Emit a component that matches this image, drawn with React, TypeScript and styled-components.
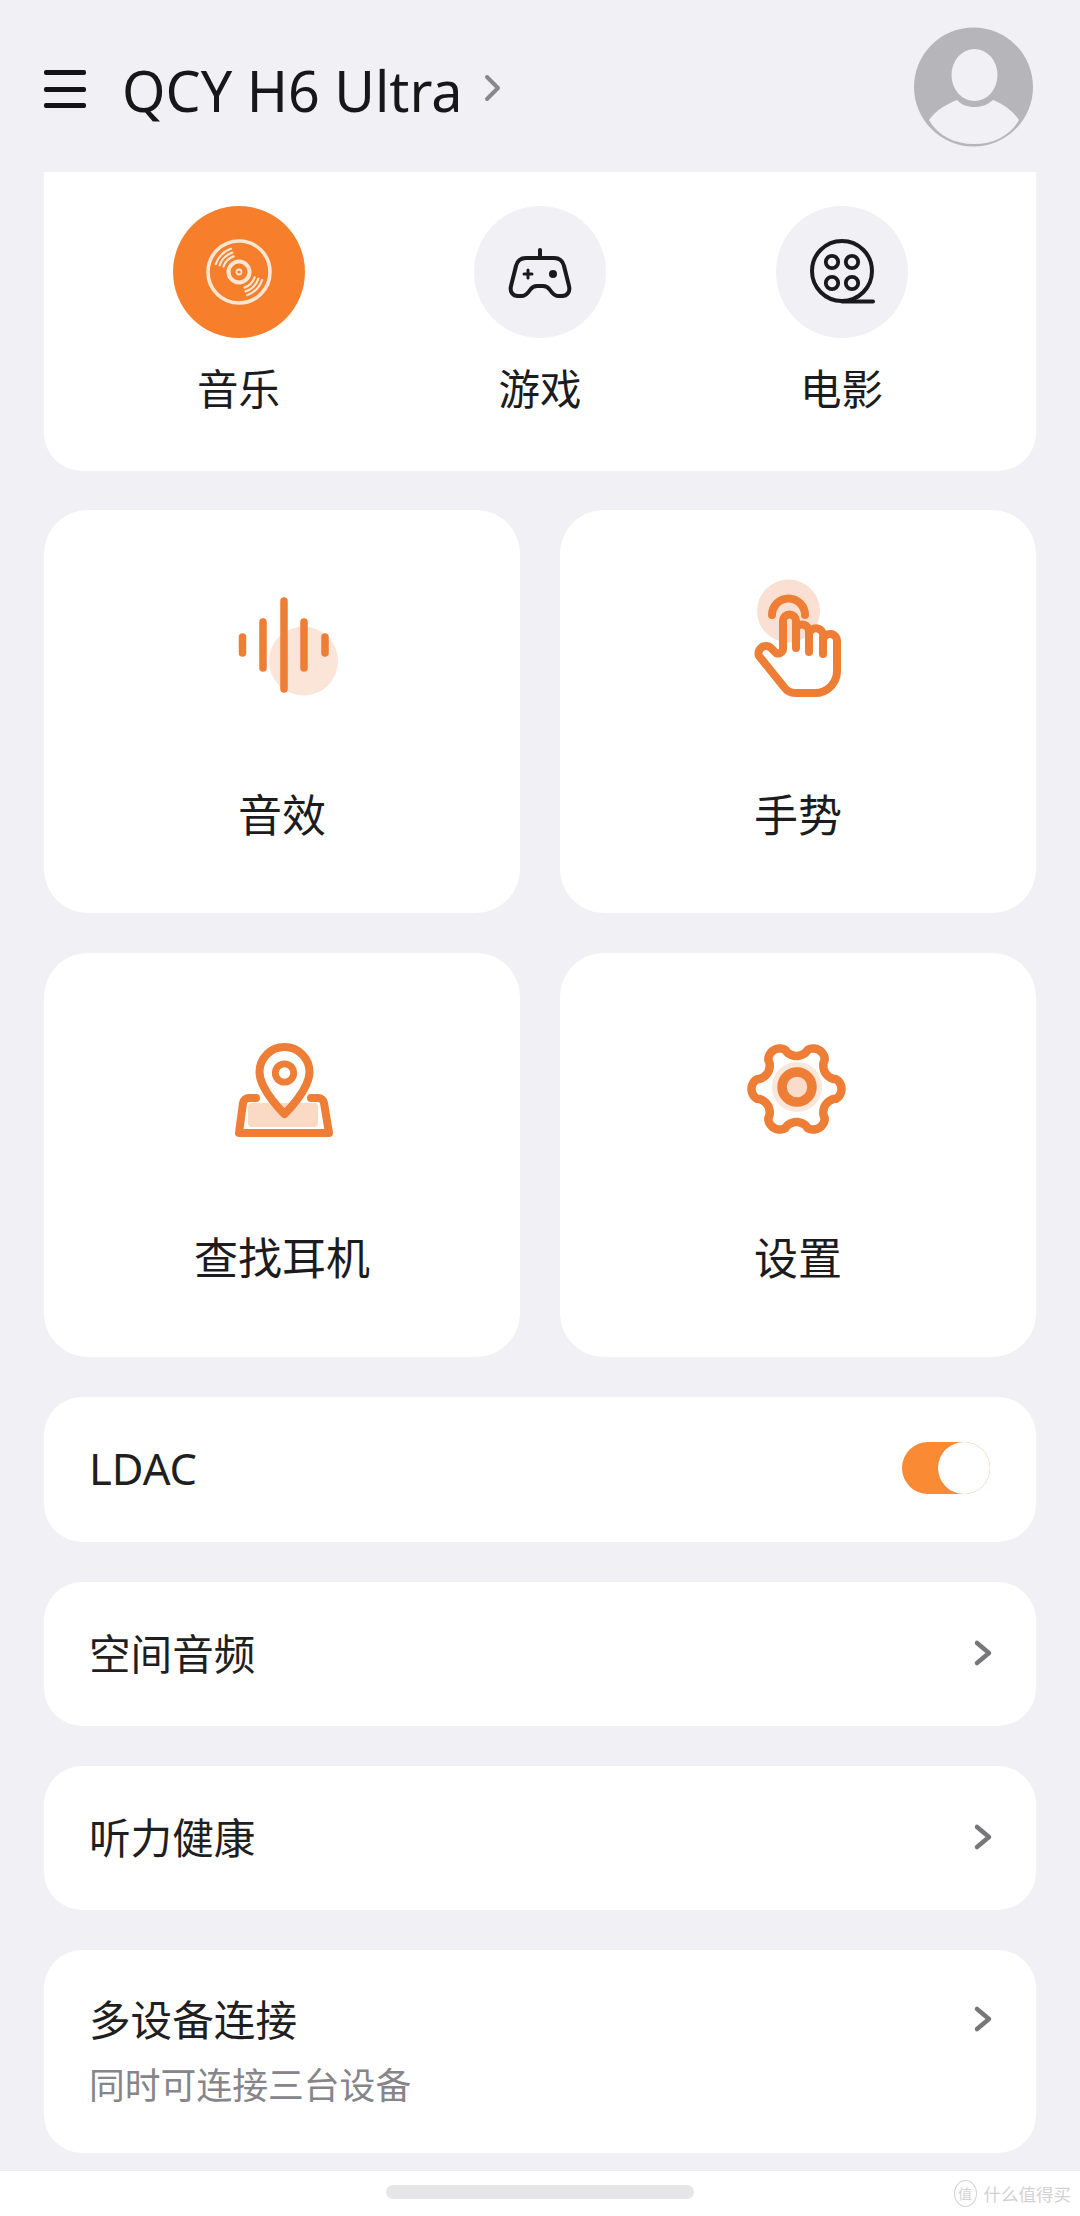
import React from "react";
import styled, { createGlobalStyle } from "styled-components";

const FONT = `"Noto Sans", "Noto Sans CJK SC", sans-serif`;
const ORANGE = "#ee7e36";

const Global = createGlobalStyle`
  html, body { margin: 0; padding: 0; background: #f1f0f5; }
  * { box-sizing: border-box; }
  svg { overflow: visible; }
`;

const Page = styled.div`
  position: relative;
  width: 1080px;
  height: 2216px;
  background: #f1f0f5;
  font-family: ${FONT};
  color: #1c1c1e;
  display: flex;
  flex-direction: column;
  overflow: hidden;
`;

const Header = styled.header`
  height: 172px;
  flex: none;
  padding: 0 47px 0 44px;
  display: flex;
  align-items: flex-start;
`;

const Burger = styled.div`
  margin-top: 70px;
  width: 42px;
  height: 38px;
  display: flex;
  flex-direction: column;
  justify-content: space-between;
  margin-right: 36px;
  span { display: block; height: 5px; background: #141416; border-radius: 2px; }
`;

const Title = styled.div`
  margin-top: 52px;
  font-size: 55.7px;
  line-height: 76px;
  color: #17171a;
`;

const TitleChevron = styled.svg`
  margin: 75px 0 0 22px;
  flex: none;
`;

const AvatarSvg = styled.svg`
  margin: 27px 0 0 auto;
  flex: none;
`;

const Main = styled.main`
  flex: 1;
  padding: 0 44px;
  display: flex;
  flex-direction: column;
  gap: 40px;
`;

const ModeCard = styled.section`
  height: 299px;
  margin-bottom: -1px;
  background: #fff;
  border-radius: 0 0 38px 38px;
  padding-top: 34px;
  display: grid;
  grid-template-columns: repeat(3, 301.5px);
  justify-content: center;
  align-content: start;
`;

const Mode = styled.div`
  display: flex;
  flex-direction: column;
  align-items: center;
  gap: 26px;
`;

const ModeCircle = styled.div<{ $active?: boolean }>`
  width: 132px;
  height: 132px;
  border-radius: 50%;
  background: ${(p) => (p.$active ? "#f77f2c" : "#f1f0f5")};
  display: flex;
  align-items: center;
  justify-content: center;
`;

const ModeLabel = styled.div`
  font-size: 41.5px;
  line-height: 50px;
`;

const Features = styled.div`
  display: grid;
  grid-template-columns: 476px 476px;
  grid-template-rows: 403px 404px;
  gap: 40px;
`;

const Feature = styled.div`
  background: #fff;
  border-radius: 44px;
  padding-top: 80px;
  display: flex;
  flex-direction: column;
  align-items: center;
`;

const FeatureLabel = styled.div`
  margin-top: 75px;
  font-size: 44px;
  line-height: 60px;
`;

const Row = styled.div<{ $h: number }>`
  height: ${(p) => p.$h}px;
  background: #fff;
  border-radius: 38px;
  padding: 0 44px 0 45px;
  display: flex;
  align-items: center;
  justify-content: space-between;
`;

const ToggleRow = styled(Row)`
  padding-bottom: 3px;
`;

const RowText = styled.div`
  font-size: 41.6px;
  line-height: 60px;
  color: #1f1f22;
`;

const LatinText = styled(RowText)`
  font-size: 43.5px;
`;

const Toggle = styled.div`
  position: relative;
  width: 88px;
  height: 52px;
  margin-right: 2px;
  border-radius: 26px;
  background: #fb8a35;
  &::after {
    content: "";
    position: absolute;
    top: 0;
    right: 0;
    width: 52px;
    height: 52px;
    border-radius: 50%;
    background: #fff;
    box-shadow: 0 0 2px rgba(0, 0, 0, 0.08);
  }
`;

const MultiRow = styled(Row)`
  align-items: flex-start;
  padding-top: 40px;
`;

const SubText = styled.div`
  margin-top: 10px;
  font-size: 35.8px;
  line-height: 50px;
  color: #85858a;
`;

const ChevronSlot = styled.div`
  height: 60px;
  display: flex;
  align-items: center;
`;

const ChevronSvg = styled.svg`
  flex: none;
  margin-bottom: 2px;
`;

const BottomBar = styled.footer`
  height: 46px;
  flex: none;
  background: #fff;
  border-top: 1px solid #ececf0;
  display: flex;
  justify-content: center;
  padding-top: 14px;
`;

const HomePill = styled.div`
  width: 308px;
  height: 14px;
  border-radius: 7px;
  background: #e6e6e8;
`;

const Watermark = styled.div`
  position: absolute;
  right: 9px;
  bottom: 9px;
  display: flex;
  align-items: center;
  gap: 7px;
  color: #d2d2d4;
  font-size: 17.5px;
  line-height: 24px;
`;

const WatermarkBadge = styled.span`
  width: 23px;
  height: 27px;
  border: 1.5px solid #d2d2d4;
  border-radius: 50%;
  display: flex;
  align-items: center;
  justify-content: center;
  font-size: 14px;
`;

const Chevron = () => (
  <ChevronSvg width="18" height="26" viewBox="0 0 18 26" fill="none" stroke="#77777a" strokeWidth="4.5" strokeLinecap="round" strokeLinejoin="round">
    <path d="M3 3 L15 13 L3 23" />
  </ChevronSvg>
);

const discArcs = (mid: number) =>
  [16.5, 20.5, 24.5].map((r) => {
    const a = ((mid - 26) * Math.PI) / 180;
    const b = ((mid + 26) * Math.PI) / 180;
    return `M${(r * Math.cos(a)).toFixed(2)} ${(r * Math.sin(a)).toFixed(2)} A${r} ${r} 0 0 1 ${(r * Math.cos(b)).toFixed(2)} ${(r * Math.sin(b)).toFixed(2)}`;
  }).join(" ");

const DiscIcon = () => (
  <svg width="72" height="72" viewBox="-36 -36 72 72" fill="none" stroke="#fbe6d2">
    <circle r="31" strokeWidth="3.6" />
    <circle r="10.5" strokeWidth="4" />
    <circle r="2.5" strokeWidth="1.8" />
    <path d={discArcs(-135)} strokeWidth="2.2" strokeLinecap="round" />
    <path d={discArcs(45)} strokeWidth="2.2" strokeLinecap="round" />
  </svg>
);

const PadIcon = () => (
  <svg width="72" height="72" viewBox="-36 -36 72 72" fill="none" stroke="#1a1a1c" strokeWidth="4" strokeLinecap="round" strokeLinejoin="round">
    <path d="M0 -22 V-14" />
    <path d="M-14 -14 H14 C20 -14 23 -10 24 -6 L29 14 C30.5 20 27 24 22 24 H18 C14 24 12 21 10 18 C8 15 6 14 3 14 H-3 C-6 14 -8 15 -10 18 C-12 21 -14 24 -18 24 H-22 C-27 24 -30.5 20 -29 14 L-24 -6 C-23 -10 -20 -14 -14 -14 Z" />
    <path d="M-16 2 H-8 M-12 -2 V6" strokeWidth="3" />
    <circle cx="13" cy="2" r="4" fill="#1a1a1c" stroke="none" />
  </svg>
);

const FilmIcon = () => (
  <svg width="72" height="72" viewBox="-36 -36 72 72" fill="none" stroke="#1a1a1c" strokeWidth="4" strokeLinecap="round">
    <circle cy="-1" r="30" />
    <path d="M0 29.5 H31" />
    <circle cx="-10" cy="-10" r="6.2" strokeWidth="3.8" />
    <circle cx="10" cy="-10" r="6.2" strokeWidth="3.8" />
    <circle cx="-10" cy="11" r="6.2" strokeWidth="3.8" />
    <circle cx="10" cy="11" r="6.2" strokeWidth="3.8" />
  </svg>
);

const SoundIcon = () => (
  <svg width="120" height="120" viewBox="222 590 120 120" fill="none" stroke={ORANGE} strokeWidth="7.5" strokeLinecap="round">
    <circle cx="303.5" cy="661" r="34.5" fill="#fbe4d8" stroke="none" />
    <path d="M242.5 637 V653 M263 622 V668 M284 601 V689 M304 622 V668 M325 637 V653" />
  </svg>
);

const HandIcon = () => (
  <svg width="120" height="120" viewBox="738 590 120 120" fill="none" stroke={ORANGE} strokeWidth="8" strokeLinecap="round" strokeLinejoin="round">
    <circle cx="788.5" cy="611" r="31.5" fill="#fae0d2" stroke="none" />
    <path d="M772 615 A16.5 16.5 0 0 1 805 615" />
    <path d="M783 649 V621 A6.5 6.5 0 0 1 796 621 V648 M796 628 A7 7 0 0 1 809 632 V652 M809 634 A7 7 0 0 1 823 637 V654 M823 640 A7 7 0 0 1 837 642 V671 A22 22 0 0 1 815 693 H796 A14 14 0 0 1 784 687 L759 656 A7 7 0 0 1 761 648 A7 7 0 0 1 771 648 L776 653 A5 5 0 0 0 783 649" />
  </svg>
);

const PinIcon = () => (
  <svg width="120" height="120" viewBox="222 1033 120 120" fill="none" stroke={ORANGE} strokeWidth="8" strokeLinecap="round" strokeLinejoin="round">
    <rect x="248" y="1103" width="70" height="24" rx="4" fill="#fad9c5" stroke="none" />
    <path d="M284.5 1114 C284.5 1114 259.5 1090 259.5 1072 A25 25 0 0 1 309.5 1072 C309.5 1090 284.5 1114 284.5 1114 Z" />
    <circle cx="284.5" cy="1073" r="9.2" strokeWidth="6.8" />
    <path d="M256 1098 H249 A6 6 0 0 0 243 1103 L239 1133 H329 L324 1103 A6 6 0 0 0 318 1098 H311" />
  </svg>
);

const gearPath = () => {
  const cx = 796.5;
  const cy = 1089;
  const pts: string[] = [];
  for (let i = 0; i < 180; i++) {
    const t = (i / 180) * Math.PI * 2;
    const f = Math.cos(6 * t);
    const r = 39 + 6 * Math.sign(f) * Math.pow(Math.abs(f), 0.6);
    pts.push(`${(cx + r * Math.cos(t)).toFixed(2)} ${(cy + r * Math.sin(t)).toFixed(2)}`);
  }
  return `M${pts.join(" L")} Z`;
};

const GearIcon = () => (
  <svg width="120" height="120" viewBox="738 1033 120 120" fill="none" stroke={ORANGE} strokeLinejoin="round">
    <path d={gearPath()} strokeWidth="8.5" />
    <circle cx="797" cy="1087" r="25" fill="#fbe6da" stroke="none" />
    <circle cx="797" cy="1087" r="15" fill="#fbdccb" strokeWidth="9.5" />
  </svg>
);

const Avatar = () => (
  <AvatarSvg width="119" height="120" viewBox="914 27 119 120">
    <circle cx="973.5" cy="87" r="59.5" fill="#b6b6ba" />
    <ellipse cx="974.5" cy="75" rx="23" ry="26" fill="#f1f0f5" />
    <path
      d="M929 120 C936 110 947 104 957 100 C962 105 967 107 974.5 107 C982 107 987 105 993 100 C1003 104 1012 110 1019 120 C1010 136 993 144 974 144 C955 144 938 136 929 120 Z"
      fill="#f1f0f5"
    />
  </AvatarSvg>
);

export default function App() {
  return (
    <Page>
      <Global />
      <Header>
        <Burger><span /><span /><span /></Burger>
        <Title>QCY H6 Ultra</Title>
        <TitleChevron width="15" height="26" viewBox="0 0 15 26" fill="none" stroke="#88888c" strokeWidth="4" strokeLinecap="round" strokeLinejoin="round">
          <path d="M2 2 L13 13 L2 24" />
        </TitleChevron>
        <Avatar />
      </Header>
      <Main>
        <ModeCard>
          <Mode><ModeCircle $active><DiscIcon /></ModeCircle><ModeLabel>音乐</ModeLabel></Mode>
          <Mode><ModeCircle><PadIcon /></ModeCircle><ModeLabel>游戏</ModeLabel></Mode>
          <Mode><ModeCircle><FilmIcon /></ModeCircle><ModeLabel>电影</ModeLabel></Mode>
        </ModeCard>
        <Features>
          <Feature><SoundIcon /><FeatureLabel>音效</FeatureLabel></Feature>
          <Feature><HandIcon /><FeatureLabel>手势</FeatureLabel></Feature>
          <Feature><PinIcon /><FeatureLabel>查找耳机</FeatureLabel></Feature>
          <Feature><GearIcon /><FeatureLabel>设置</FeatureLabel></Feature>
        </Features>
        <ToggleRow $h={145}>
          <LatinText>LDAC</LatinText>
          <Toggle />
        </ToggleRow>
        <Row $h={144}>
          <RowText>空间音频</RowText>
          <Chevron />
        </Row>
        <Row $h={144}>
          <RowText>听力健康</RowText>
          <Chevron />
        </Row>
        <MultiRow $h={203}>
          <div>
            <RowText>多设备连接</RowText>
            <SubText>同时可连接三台设备</SubText>
          </div>
          <ChevronSlot><Chevron /></ChevronSlot>
        </MultiRow>
      </Main>
      <BottomBar><HomePill /></BottomBar>
      <Watermark>
        <WatermarkBadge>值</WatermarkBadge>
        <span>什么值得买</span>
      </Watermark>
    </Page>
  );
}
